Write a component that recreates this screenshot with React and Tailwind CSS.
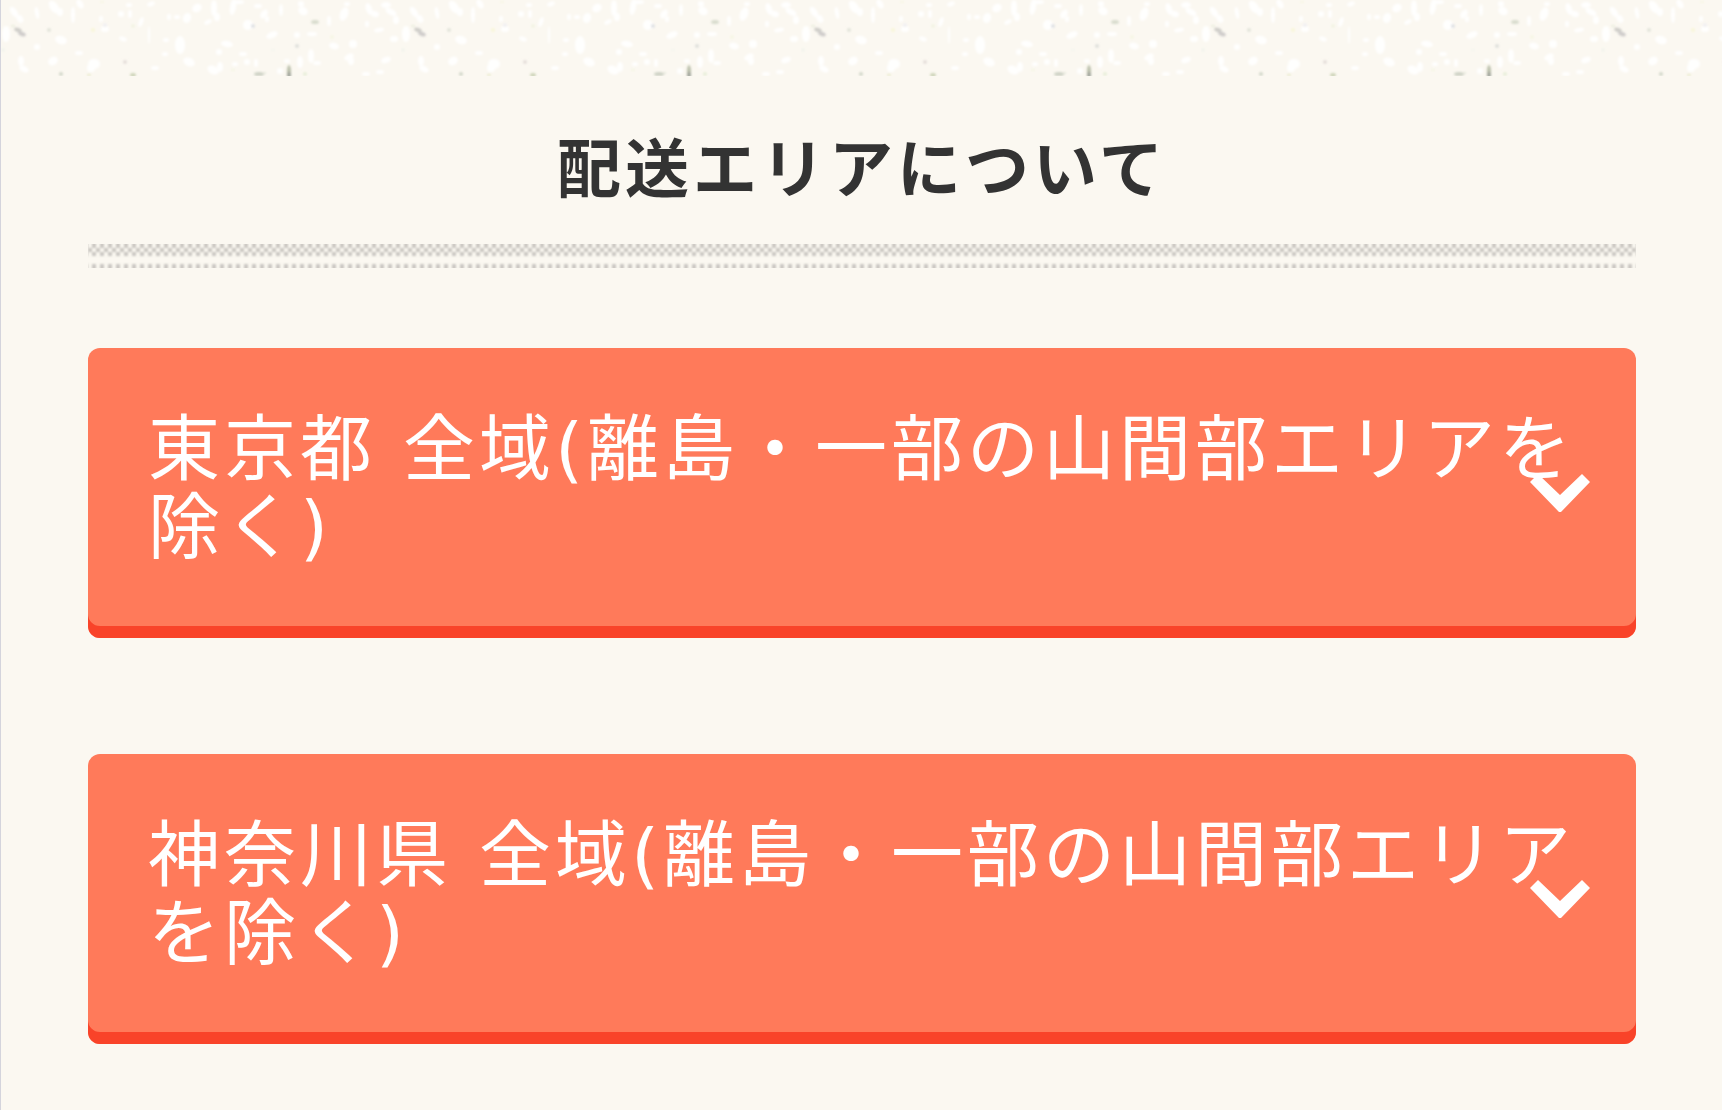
const areas = [
  { id: 'tokyo', label: '東京都 全域(離島・一部の山間部エリアを除く)' },
  { id: 'kanagawa', label: '神奈川県 全域(離島・一部の山間部エリアを除く)' },
];

// paper grain, one tile is 400px wide: [x, y, rx, ry, angle]
const flakes = [
  [13, 12, 3, 6, -35], [19, 19, 3, 4, -30], [5, 34, 4, 8, 0], [36, 13, 2, 6, -10],
  [53, 7, 4, 7, -35], [59, 12, 3, 4, 0], [72, 15, 2, 8, 0], [79, 4, 3, 5, -30],
  [36, 47, 3, 3, 0], [60, 40, 6, 4, 20], [52, 61, 5, 4, -30], [78, 53, 4, 2, 0],
  [20, 61, 3, 5, 0], [23, 69, 5, 3, 30], [93, 64, 6, 5, 0], [90, 68, 4, 4, 0],
  [104, 29, 4, 3, 0], [122, 39, 4, 2, 20], [120, 14, 3, 3, 0], [129, 14, 2, 4, 0],
  [128, 5, 3, 2, 0], [140, 22, 2, 5, 20], [148, 35, 1, 9, 0], [150, 4, 4, 2, -20],
  [168, 17, 2, 3, 0], [176, 17, 3, 2, 0], [186, 18, 4, 5, 20], [196, 8, 5, 4, -35],
  [165, 40, 3, 2, 0], [179, 45, 5, 9, 0], [164, 54, 3, 2, 0], [188, 62, 6, 4, 25],
  [207, 22, 4, 2, -30], [213, 8, 3, 8, 0], [216, 17, 3, 4, 0], [232, 7, 3, 8, 10],
  [238, 2, 5, 2, 0], [257, 6, 4, 2, 0], [263, 14, 3, 5, 35], [247, 25, 5, 5, 0],
  [280, 10, 2, 6, 0], [266, 19, 2, 3, 0], [271, 35, 6, 3, -25], [302, 11, 5, 4, 35],
  [300, 4, 3, 3, 0], [328, 21, 2, 5, 0], [343, 14, 4, 7, 20], [346, 4, 3, 2, 0],
  [368, 9, 3, 6, -20], [374, 14, 4, 3, 20], [385, 5, 5, 3, 0], [390, 12, 6, 3, 30],
  [395, 20, 3, 4, 0], [378, 30, 5, 2, -10], [366, 24, 2, 3, 0], [393, 39, 4, 3, 0],
  [226, 44, 6, 3, 10], [218, 52, 3, 3, 0], [242, 54, 4, 2, 0], [296, 35, 3, 3, 0],
  [311, 34, 5, 2, 0], [333, 46, 5, 3, 15], [352, 44, 4, 4, 0], [348, 57, 5, 3, -30],
  [350, 61, 3, 4, 0], [385, 60, 5, 3, -20], [310, 56, 3, 7, 0], [299, 62, 3, 6, 0],
  [316, 63, 4, 2, 0], [212, 70, 6, 4, 30], [219, 67, 3, 5, 0], [234, 64, 3, 2, 0],
  [246, 62, 3, 3, 0], [255, 63, 2, 4, 0], [279, 71, 3, 3, 0], [286, 61, 3, 2, 0],
  [365, 74, 4, 2, 0], [379, 72, 4, 2, 0], [100, 19, 2, 3, 0], [154, 68, 4, 2, 0],
];

// [x, y, rx, ry, colour, angle]
const specks = [
  [17, 30, 4, 2, '#cfcec9', 20], [21, 34, 4, 2, '#cfcccb', 20], [12, 26, 2, 1, '#e9ecdc', 0],
  [48, 30, 2, 2, '#e2e5da', 0], [92, 30, 2, 2, '#f8f7d9', 0], [104, 25, 2, 2, '#f1f0f3', 0],
  [132, 26, 2, 2, '#f3f5e3', 0], [124, 62, 2, 2, '#e5deda', 0], [60, 74, 2, 2, '#d3d8ca', 0],
  [88, 75, 2, 1, '#e6e9c6', 0], [132, 75, 3, 2, '#cfd5ba', 0], [252, 26, 2, 2, '#dfe2e5', 0],
  [314, 22, 4, 2, '#d8dccd', 0], [296, 46, 2, 2, '#dfe1dc', 0], [258, 74, 5, 2, '#cfd3c6', 0],
  [264, 73, 1, 1, '#dfe3d5', 0], [288, 71, 2, 6, '#bcc1ad', 0], [288, 75, 2, 3, '#a3a79d', 0],
  [304, 74, 2, 2, '#e8efd9', 0], [232, 70, 2, 1, '#f3f6e3', 0], [331, 37, 2, 2, '#f6f7e4', 0],
  [272, 50, 2, 1, '#f2f5ef', 0], [2, 50, 2, 2, '#f3f5ee', 0], [101, 2, 2, 1, '#f6f7e2', 0],
];

function PaperBand() {
  return (
    <svg className="block h-19 w-full" aria-hidden="true">
      <defs>
        <pattern id="paper" width="400" height="76" patternUnits="userSpaceOnUse">
          <g fill="#fffffe" filter="url(#soften)">
            {flakes.map(([x, y, rx, ry, angle], i) => (
              <ellipse key={i} cx={x} cy={y} rx={rx} ry={ry} transform={`rotate(${angle} ${x} ${y})`} />
            ))}
          </g>
          <g filter="url(#soften)">
            {specks.map(([x, y, rx, ry, fill, angle], i) => (
              <ellipse key={i} cx={x} cy={y} rx={rx} ry={ry} fill={fill} transform={`rotate(${angle} ${x} ${y})`} />
            ))}
          </g>
        </pattern>
        <filter id="soften">
          <feGaussianBlur stdDeviation="1" />
        </filter>
      </defs>
      <rect width="100%" height="76" fill="url(#paper)" />
    </svg>
  );
}

function DottedRule() {
  return (
    <svg className="mt-9 block h-6 w-full" aria-hidden="true">
      <defs>
        <filter id="dot-blur" x="-20%" y="-20%" width="140%" height="140%">
          <feGaussianBlur stdDeviation="1.1" />
        </filter>
        <pattern id="dots" width="8" height="24" patternUnits="userSpaceOnUse">
          <g fill="#c9c6c1" filter="url(#dot-blur)">
            <rect x="-4" y="-2" width="4" height="6" />
            <rect x="4" y="-2" width="4" height="6" />
            <rect x="0" y="4" width="4" height="4" />
            <rect x="8" y="4" width="4" height="4" />
            <rect x="-4" y="8" width="4" height="4" />
            <rect x="4" y="8" width="4" height="4" />
            <rect x="-4" y="20" width="4" height="6" />
            <rect x="4" y="20" width="4" height="6" />
          </g>
        </pattern>
      </defs>
      <rect width="100%" height="24" fill="url(#dots)" />
    </svg>
  );
}

function AreaButton({ label }) {
  return (
    <button
      type="button"
      className="relative block w-full rounded-xl bg-[#ff7a5a] px-15 pt-[62px] pb-18 text-left text-7xl leading-[78px] tracking-[4px] text-white shadow-[inset_0_-12px_0_#f94329]"
    >
      {label}
      <svg
        viewBox="0 0 60 38"
        className="absolute top-1/2 right-[46px] h-[38px] w-[60px] -translate-y-1/2"
        aria-hidden="true"
      >
        <path d="M8 0 L30 21 L52 0 L60 8 L31 38 L29 38 L0 8 Z" fill="#fff" />
      </svg>
    </button>
  );
}

export default function App() {
  return (
    <main
      lang="ja"
      className="min-h-screen border-l border-[#d4d4dc] bg-[#fbf8f1] font-['DejaVu_Sans','Noto_Sans_CJK_JP',sans-serif]"
    >
      <PaperBand />
      <section className="pt-14 pr-[86px] pl-[87px]">
        <h2 className="text-center text-[64px] leading-[76px] font-bold tracking-[4px] text-[#333]">
          配送エリアについて
        </h2>
        <DottedRule />
        <ul className="mt-20 flex flex-col gap-29">
          {areas.map((area) => (
            <li key={area.id}>
              <AreaButton label={area.label} />
            </li>
          ))}
        </ul>
      </section>
    </main>
  );
}
